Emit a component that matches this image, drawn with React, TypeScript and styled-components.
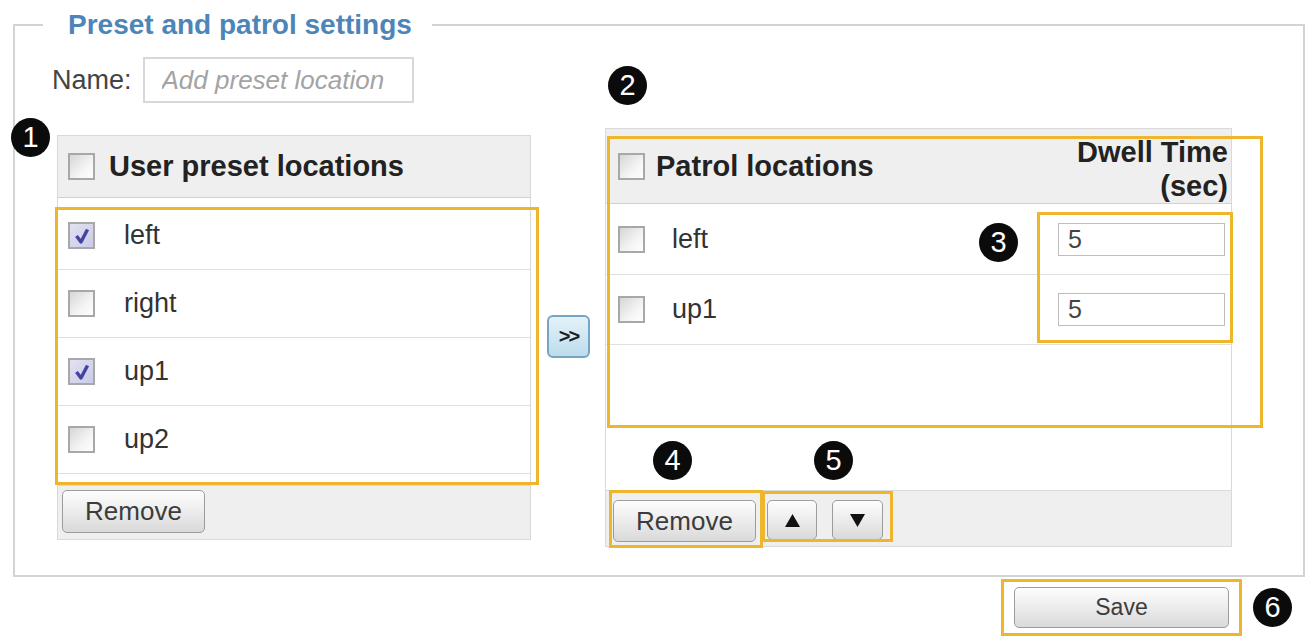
import React from "react";
import styled, { createGlobalStyle } from "styled-components";

const GlobalStyle = createGlobalStyle`
  html, body {
    margin: 0;
    padding: 0;
    background: #fff;
  }
  body {
    font-family: "Liberation Sans", Arial, sans-serif;
    color: #333;
  }
`;

const YELLOW = "#efb52c";

const Page = styled.div`
  width: 1306px;
  height: 643px;
  padding-top: 11px;
  box-sizing: border-box;
  overflow: hidden;
`;

const Fieldset = styled.fieldset`
  margin: 0 1px 0 13px;
  padding: 0 0 28px 0;
  border: 2px solid #d3d3d3;
  min-width: 0;
`;

const Legend = styled.legend`
  margin-left: 28px;
  padding: 0 20px 0 25px;
  font-size: 28px;
  line-height: 28px;
  font-weight: bold;
  color: #4d85b8;
`;

const NameRow = styled.div`
  display: flex;
  align-items: center;
  gap: 11px;
  margin-top: 18px;
  padding-left: 37px;
`;

const NameLabel = styled.span`
  font-size: 27px;
  color: #444;
`;

const NameInput = styled.input`
  width: 271px;
  height: 46px;
  box-sizing: border-box;
  border: 2px solid #d8d8d8;
  padding: 0 0 0 17px;
  font: italic 26px "Liberation Sans", Arial, sans-serif;
  outline: none;
  &::placeholder {
    color: #a3a3a3;
    font-style: italic;
  }
`;

const Columns = styled.div`
  display: flex;
  align-items: flex-start;
  margin-top: 25px;
  padding-left: 42px;
`;

const Panel = styled.div<{ $width: number; $offset?: number }>`
  position: relative;
  width: ${(p) => p.$width}px;
  margin-top: ${(p) => p.$offset ?? 0}px;
  border: 1px solid #d9d9d9;
  box-sizing: border-box;
  background: #fff;
`;

const PanelHeader = styled.div<{ $height: number; $pad: number }>`
  height: ${(p) => p.$height}px;
  box-sizing: border-box;
  display: flex;
  align-items: center;
  padding: 0 3px 0 ${(p) => p.$pad}px;
  background: #efefef;
  border-bottom: 1px solid #cfd0dc;
`;

const HeaderTitle = styled.span<{ $gap: number }>`
  margin-left: ${(p) => p.$gap}px;
  font-size: 29px;
  font-weight: bold;
  color: #222;
`;

const DwellHead = styled.div`
  margin-left: auto;
  align-self: flex-start;
  padding-top: 6px;
  text-align: right;
  font-size: 29px;
  line-height: 34px;
  font-weight: bold;
  color: #222;
`;

const List = styled.div<{ $height: number; $top: number }>`
  height: ${(p) => p.$height}px;
  box-sizing: border-box;
  padding-top: ${(p) => p.$top}px;
`;

const Row = styled.div<{ $height: number; $pad: number; $gap: number }>`
  height: ${(p) => p.$height}px;
  box-sizing: border-box;
  display: flex;
  align-items: center;
  gap: ${(p) => p.$gap}px;
  padding: 0 6px 0 ${(p) => p.$pad}px;
  border-bottom: 1px solid #e0e0e0;
`;

const RowText = styled.span`
  font-size: 27px;
  color: #333;
`;

const DwellInput = styled.input`
  margin-left: auto;
  width: 167px;
  height: 33px;
  box-sizing: border-box;
  border: 1px solid #bdbdbd;
  padding: 0 0 0 9px;
  font: 25px "Liberation Sans", Arial, sans-serif;
  color: #444;
  outline: none;
`;

const Footer = styled.div<{ $height: number; $top: number; $left: number }>`
  height: ${(p) => p.$height}px;
  box-sizing: border-box;
  display: flex;
  align-items: flex-start;
  padding: ${(p) => p.$top}px 0 0 ${(p) => p.$left}px;
  background: #efefef;
  border-top: 1px solid #dadada;
`;

const Button = styled.button<{ $w: number; $h: number; $fs?: number; $ml?: number }>`
  width: ${(p) => p.$w}px;
  height: ${(p) => p.$h}px;
  margin-left: ${(p) => p.$ml ?? 0}px;
  box-sizing: border-box;
  padding: 0;
  border: 1px solid #9c9c9c;
  border-radius: 5px;
  background: linear-gradient(#fdfdfd, #ececec 50%, #d9d9d9);
  box-shadow: inset 0 1px 0 #fff;
  font-family: inherit;
  font-size: ${(p) => p.$fs ?? 26}px;
  color: #3c3c3c;
  display: flex;
  align-items: center;
  justify-content: center;
`;

const MoveCol = styled.div`
  padding: 187px 15px 0 16px;
`;

const MoveButton = styled.button`
  width: 43px;
  height: 43px;
  box-sizing: border-box;
  padding: 0;
  border: 2px solid #76a4c2;
  border-radius: 6px;
  background: linear-gradient(#e4f2fa, #bddcec);
  font: bold 20px "Liberation Sans", Arial, sans-serif;
  letter-spacing: -2px;
  color: #1c1c1c;
`;

const CheckBox = styled.span<{ $checked?: boolean }>`
  flex: none;
  width: 27px;
  height: 27px;
  box-sizing: border-box;
  border: 2px solid #a8a8a8;
  background: ${(p) =>
    p.$checked
      ? "linear-gradient(135deg, #e2e2f3, #cacae6)"
      : "linear-gradient(135deg, #d6d6d6, #f6f6f6 65%, #fdfdfd)"};
  display: flex;
  align-items: center;
  justify-content: center;
`;

const Callout = styled.div<{ $x: number; $y: number; $w: number; $h: number }>`
  position: absolute;
  left: ${(p) => p.$x}px;
  top: ${(p) => p.$y}px;
  width: ${(p) => p.$w}px;
  height: ${(p) => p.$h}px;
  box-sizing: border-box;
  border: 3px solid ${YELLOW};
  pointer-events: none;
`;

const Badge = styled.span`
  flex: none;
  width: 39px;
  height: 39px;
  border-radius: 50%;
  background: #0b0b0b;
  color: #fff;
  font-size: 29px;
  display: flex;
  align-items: center;
  justify-content: center;
`;

const PlacedBadge = styled(Badge)<{ $x: number; $y: number }>`
  position: absolute;
  left: ${(p) => p.$x}px;
  top: ${(p) => p.$y}px;
`;

const SaveRow = styled.div`
  display: flex;
  justify-content: flex-end;
  align-items: center;
  gap: 11px;
  margin-top: 2px;
  padding-right: 14px;
`;

const SaveFrame = styled.div`
  border: 3px solid ${YELLOW};
  padding: 5px 10px;
`;

const Check = ({ checked }: { checked?: boolean }) => (
  <CheckBox $checked={checked}>
    {checked && (
      <svg width="18" height="18" viewBox="0 0 18 18">
        <path d="M3.5 9 L8 15 L14.5 2.5" fill="none" stroke="#4343a0" strokeWidth="3.4" strokeLinejoin="round" />
      </svg>
    )}
  </CheckBox>
);

const Triangle = ({ down }: { down?: boolean }) => (
  <svg width="17" height="15" viewBox="0 0 17 15">
    <path d={down ? "M1 1 H16 L8.5 14 Z" : "M8.5 1 L16 14 H1 Z"} fill="#111" />
  </svg>
);

const presets = [
  { name: "left", checked: true },
  { name: "right", checked: false },
  { name: "up1", checked: true },
  { name: "up2", checked: false },
];

const patrol = ["left", "up1"];

export default function App() {
  return (
    <Page>
      <GlobalStyle />
      <Fieldset>
        <Legend>Preset and patrol settings</Legend>
        <NameRow>
          <NameLabel>Name:</NameLabel>
          <NameInput placeholder="Add preset location" />
        </NameRow>
        <Columns>
          <Panel $width={474} $offset={7}>
            <PlacedBadge $x={-47} $y={-18}>1</PlacedBadge>
            <PanelHeader $height={62} $pad={10}>
              <Check />
              <HeaderTitle $gap={14}>User preset locations</HeaderTitle>
            </PanelHeader>
            <List $height={287} $top={4}>
              {presets.map((p) => (
                <Row key={p.name} $height={68} $pad={10} $gap={29}>
                  <Check checked={p.checked} />
                  <RowText>{p.name}</RowText>
                </Row>
              ))}
            </List>
            <Footer $height={54} $top={4} $left={4}>
              <Button $w={143} $h={43}>Remove</Button>
            </Footer>
            <Callout $x={-3} $y={71} $w={484} $h={278} />
          </Panel>

          <MoveCol>
            <MoveButton>&gt;&gt;</MoveButton>
          </MoveCol>

          <Panel $width={627}>
            <PlacedBadge $x={2} $y={-63}>2</PlacedBadge>
            <PanelHeader $height={75} $pad={12}>
              <Check />
              <HeaderTitle $gap={11}>Patrol locations</HeaderTitle>
              <DwellHead>
                Dwell Time
                <br />
                (sec)
              </DwellHead>
            </PanelHeader>
            <List $height={286} $top={1}>
              {patrol.map((name) => (
                <Row key={name} $height={70} $pad={12} $gap={27}>
                  <Check />
                  <RowText>{name}</RowText>
                  <DwellInput defaultValue="5" />
                </Row>
              ))}
            </List>
            <Footer $height={56} $top={9} $left={7}>
              <Button $w={143} $h={42}>Remove</Button>
              <Button $w={50} $h={40} $ml={11}>
                <Triangle />
              </Button>
              <Button $w={51} $h={40} $ml={15}>
                <Triangle down />
              </Button>
            </Footer>
            <Callout $x={1} $y={7} $w={656} $h={292} />
            <Callout $x={431} $y={83} $w={196} $h={131} />
            <PlacedBadge $x={373} $y={94}>3</PlacedBadge>
            <PlacedBadge $x={47} $y={312}>4</PlacedBadge>
            <PlacedBadge $x={208} $y={312}>5</PlacedBadge>
            <Callout $x={3} $y={361} $w={154} $h={58} />
            <Callout $x={156} $y={362} $w={131} $h={51} />
          </Panel>
        </Columns>
      </Fieldset>
      <SaveRow>
        <SaveFrame>
          <Button $w={215} $h={41} $fs={23}>Save</Button>
        </SaveFrame>
        <Badge>6</Badge>
      </SaveRow>
    </Page>
  );
}
